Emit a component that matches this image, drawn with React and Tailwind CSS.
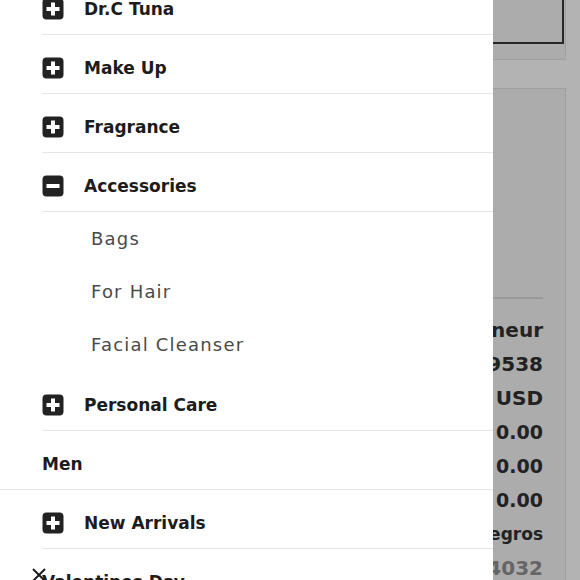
import React from "react";

const PlusBox = ({ minus }) => (
  <svg width="22" height="22" viewBox="0 0 22 22" className="shrink-0">
    <rect x="0.5" y="0.5" width="21" height="21" rx="4" fill="#222" />
    <rect x="4.5" y="9" width="13" height="4" fill="#fff" />
    {!minus && <rect x="9" y="4.5" width="4" height="13" fill="#fff" />}
  </svg>
);

const Row = ({ label, minus }) => (
  <div className="ml-[42px] border-b border-[#e6e6e6] h-[59px] pt-[22px] flex items-start gap-5">
    <PlusBox minus={minus} />
    <span className="text-[17px] leading-[22px] font-bold text-[#1c1c1c]">{label}</span>
  </div>
);

const SubItem = ({ label }) => (
  <div className="h-[53px] pl-[91px] flex items-center text-[18px] tracking-[1.2px] text-[#4a4a4a]">
    {label}
  </div>
);

const values = [
  { text: "Entrepreneur", cls: "text-[20px] text-[#222]" },
  { text: "09179538", cls: "text-[20px] text-[#222]" },
  { text: "USD", cls: "text-[20px] text-[#222]" },
  { text: "0.00", cls: "text-[19px] text-[#222]" },
  { text: "0.00", cls: "text-[19px] text-[#222]" },
  { text: "0.00", cls: "text-[19px] text-[#222]" },
  { text: "Negros", cls: "text-[17px] text-[#222]" },
  { text: "64032", cls: "text-[20px] text-[#666]" },
];

export default function App() {
  return (
    <div className="relative w-[580px] h-[580px] overflow-hidden flex bg-[#b3b3b3] font-['DejaVu_Sans',sans-serif]">
      {/* drawer */}
      <div className="relative z-10 w-[493px] shrink-0 bg-white">
        <div className="-mt-[24px]">
          <Row label="Dr.C Tuna" />
          <Row label="Make Up" />
          <Row label="Fragrance" />
          <Row label="Accessories" minus />
          <div className="pb-[1px]">
            <SubItem label="Bags" />
            <SubItem label="For Hair" />
            <SubItem label="Facial Cleanser" />
          </div>
          <Row label="Personal Care" />
          <div className="border-b border-[#e6e6e6] h-[59px] pt-[22px] pl-[42px]">
            <span className="text-[17px] leading-[22px] font-bold text-[#1c1c1c]">Men</span>
          </div>
          <Row label="New Arrivals" />
          <div className="h-[59px] pt-[22px] pl-[42px]">
            <span className="text-[17px] leading-[22px] font-bold text-[#1c1c1c]">Valentines Day</span>
          </div>
        </div>
        <button className="absolute left-[31px] top-[567px] w-[16px] h-[16px]">
          <svg width="16" height="16" viewBox="0 0 16 16">
            <path d="M2 2 L14 14 M14 2 L2 14" stroke="#1c1c1c" strokeWidth="2" />
          </svg>
        </button>
      </div>

      {/* page behind overlay */}
      <div className="flex-1 flex flex-col min-h-0">
        <div className="shrink-0 w-[73px] h-[60px] bg-[#acacac] border-r border-b border-[#9f9f9f]">
          <div className="w-[71px] h-[44px] border-r-2 border-b-2 border-[#262626]" />
        </div>
        <div className="shrink-0 h-[28px]" />
        <div className="w-[73px] flex-1 min-h-0 bg-[#acacac] border-t border-r border-[#9f9f9f] pr-[22px]">
          <div className="mt-[208px] w-[50px] h-[2px] bg-[#9a9a9a]" />
          <div className="mt-[14px] flex flex-col items-end">
            {values.map((v, i) => (
              <div key={i} className={`h-[34px] leading-[34px] font-bold whitespace-nowrap ${v.cls}`}>
                {v.text}
              </div>
            ))}
          </div>
        </div>
      </div>
    </div>
  );
}
